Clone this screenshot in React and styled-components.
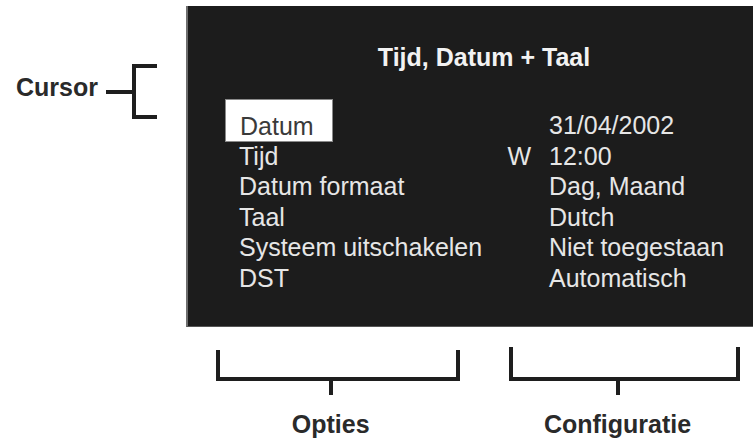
import { Fragment } from "react";
import styled, { createGlobalStyle } from "styled-components";

const GlobalStyle = createGlobalStyle`
    html, body {
        margin: 0;
        padding: 0;
        background: #ffffff;
    }
    body {
        font-family: "Liberation Sans", Arial, Helvetica, sans-serif;
        color: #222222;
    }
`;

const Page = styled.main`
    width: 754px;
    height: 439px;
    overflow: hidden;
    display: flex;
    flex-direction: column;
`;

const Top = styled.div`
    display: flex;
    align-items: flex-start;
`;

/* Cursor label with its bracket, left of the screen */
const CursorNote = styled.div`
    width: 186px;
    display: flex;
    align-items: center;
    padding: 64px 0 0 16px;
    box-sizing: border-box;
`;

const NoteLabel = styled.span`
    font-size: 25px;
    font-weight: 700;
    line-height: 30px;
    color: #2a2a2a;
    margin-bottom: ${({ $lift }) => ($lift ? $lift * 2 : 0)}px;
`;

const Dash = styled.span`
    width: 26px;
    height: 4px;
    margin-left: 8px;
    background: #1e1e1e;
`;

const SideBracket = styled.span`
    width: 25px;
    height: 55px;
    box-sizing: border-box;
    border: 4px solid #1e1e1e;
    border-right: none;
`;

/* The on-screen menu */
const Screen = styled.section`
    width: 567px;
    height: 321px;
    margin-top: 6px;
    box-sizing: border-box;
    background: #1c1c1c;
    border-left: 2px solid #6e6e6e;
    border-bottom: 1px solid #555;
    padding: 36px 0 0 51px;
    color: #e6e6e6;
`;

const Title = styled.h1`
    margin: 0 0 38px;
    padding-right: 24px;
    text-align: center;
    font-size: 25px;
    font-weight: 700;
    line-height: 30px;
    color: #f2f2f2;
`;

const Menu = styled.div`
    display: grid;
    grid-template-columns: 250px 24px 1fr;
    column-gap: 18px;
    font-size: 25px;
    line-height: 30.5px;
`;

const Label = styled.div`
    white-space: nowrap;
    ${({ $active }) =>
        $active &&
        `
        justify-self: start;
        margin: -11px 0 -3px -14px;
        padding: 11px 18px 0 14px;
        height: 30px;
        background: #ffffff;
        border: 1px solid #8a8a8a;
        color: #3a3a3a;
    `}
`;

const Prefix = styled.div`
    text-align: right;
`;

const Value = styled.div`
    white-space: nowrap;
`;

/* Brackets under the screen */
const Notes = styled.div`
    display: flex;
    align-items: flex-start;
    gap: 49px;
    padding: 20px 0 0 216px;
`;

const Group = styled.div`
    width: ${({ $width }) => $width}px;
    margin-top: ${({ $drop }) => $drop || 0}px;
    display: flex;
    flex-direction: column;
`;

const Bracket = styled.div`
    height: ${({ $height }) => $height}px;
    box-sizing: border-box;
    border: 4px solid #1e1e1e;
    border-top: none;
`;

const Under = styled.div`
    width: 94%;
    display: flex;
    flex-direction: column;
    align-items: center;
`;

const Stem = styled.span`
    width: 4px;
    height: 14px;
    background: #1e1e1e;
`;

const Caption = styled(NoteLabel)`
    margin-top: 14px;
`;

const rows = [
    { label: "Datum", value: "31/04/2002", active: true },
    { label: "Tijd", prefix: "W", value: "12:00" },
    { label: "Datum formaat", value: "Dag, Maand" },
    { label: "Taal", value: "Dutch" },
    { label: "Systeem uitschakelen", value: "Niet toegestaan" },
    { label: "DST", value: "Automatisch" },
];

const App = () => {
    return (
        <>
            <GlobalStyle />
            <Page>
                <Top>
                    <CursorNote>
                        <NoteLabel $lift={5}>Cursor</NoteLabel>
                        <Dash />
                        <SideBracket />
                    </CursorNote>
                    <Screen>
                        <Title>Tijd, Datum + Taal</Title>
                        <Menu>
                            {rows.map((row) => (
                                <Fragment key={row.label}>
                                    <Label $active={row.active}>{row.label}</Label>
                                    <Prefix>{row.prefix}</Prefix>
                                    <Value>{row.value}</Value>
                                </Fragment>
                            ))}
                        </Menu>
                    </Screen>
                </Top>
                <Notes>
                    <Group $width={244} $drop={3}>
                        <Bracket $height={31} />
                        <Under>
                            <Stem />
                            <Caption>Opties</Caption>
                        </Under>
                    </Group>
                    <Group $width={231}>
                        <Bracket $height={34} />
                        <Under>
                            <Stem />
                            <Caption>Configuratie</Caption>
                        </Under>
                    </Group>
                </Notes>
            </Page>
        </>
    );
};

export default App;
